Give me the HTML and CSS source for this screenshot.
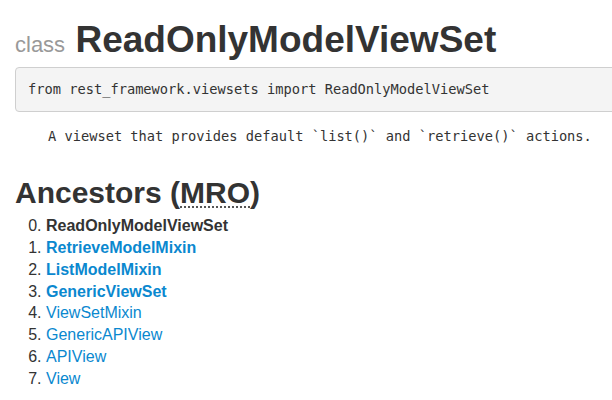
FILE: index.html
```html
<!DOCTYPE html>
<html>
<head>
<meta charset="utf-8">
<link rel="stylesheet" href="styles.css">
</head>
<body>
<div class="container">
  <h1 class="title"><small class="kind">class</small> ReadOnlyModelViewSet</h1>
  <pre class="import">from rest_framework.viewsets import ReadOnlyModelViewSet</pre>
  <pre class="doc">    A viewset that provides default `list()` and `retrieve()` actions.</pre>
  <h2 class="section">Ancestors (<abbr class="abbr" title="Method Resolution Order">MRO</abbr>)</h2>
  <ol class="mro" start="0">
    <li><strong class="current">ReadOnlyModelViewSet</strong></li>
    <li><a class="link direct" href="#">RetrieveModelMixin</a></li>
    <li><a class="link direct" href="#">ListModelMixin</a></li>
    <li><a class="link direct" href="#">GenericViewSet</a></li>
    <li><a class="link" href="#">ViewSetMixin</a></li>
    <li><a class="link" href="#">GenericAPIView</a></li>
    <li><a class="link" href="#">APIView</a></li>
    <li><a class="link" href="#">View</a></li>
  </ol>
</div>
</body>
</html>
```
FILE: styles.css
```css
html, body {
  margin: 0;
  padding: 0;
  overflow: hidden;
  background: #fff;
}
body {
  font-family: "Liberation Sans", Arial, sans-serif;
  color: #333;
}
.container {
  width: 940px;
  padding: 0 15px;
}
.title {
  font-size: 37px;
  line-height: 41px;
  font-weight: bold;
  margin: 19px 0 7px;
  color: #333;
}
.kind {
  font-size: 22px;
  line-height: 1;
  font-weight: normal;
  color: #999;
}
.import {
  margin: 0;
  padding: 11px 12px;
  background: #f4f4f4;
  border: 1px solid #cfcfcf;
  border-radius: 4px;
  font-family: "DejaVu Sans Mono", "Liberation Mono", monospace;
  font-size: 13.7px;
  line-height: 21px;
  color: #333;
}
.doc {
  margin: 14px 0 0;
  padding: 0;
  font-family: "DejaVu Sans Mono", "Liberation Mono", monospace;
  font-size: 13.7px;
  line-height: 21px;
  color: #333;
}
.section {
  font-size: 30px;
  line-height: 33px;
  font-weight: bold;
  margin: 29px 0 6px;
  color: #333;
}
.abbr {
  text-decoration: underline dotted #555;
  text-decoration-thickness: 2px;
  text-underline-offset: 3px;
  cursor: help;
}
.mro {
  margin: 0;
  padding-left: 31px;
  font-size: 16px;
  line-height: 21.86px;
}
.current {
  font-weight: bold;
  color: #333;
}
.link {
  color: #0a88cf;
  text-decoration: none;
}
.direct {
  font-weight: bold;
}
```
